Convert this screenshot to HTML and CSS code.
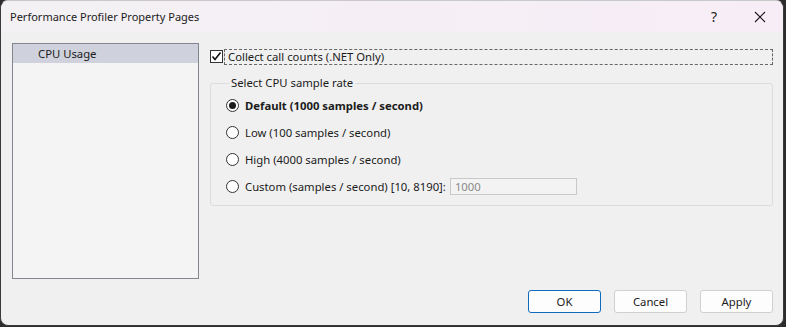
FILE: index.html
```html
<!DOCTYPE html>
<html>
<head>
<meta name="viewport" content="width=device-width, initial-scale=1">
<link rel="stylesheet" href="styles.css">
</head>
<body>

<div class="window">
  <div class="titlebar">
    <span class="title">Performance Profiler Property Pages</span>
    <span class="caption-btn help">?</span>
    <span class="caption-btn close">
      <svg width="12" height="12" viewBox="0 0 12 12"><path d="M1 1 L11 11 M11 1 L1 11" stroke="#1a1a1a" stroke-width="1.1" fill="none"/></svg>
    </span>
  </div>

  <div class="content">
    <div class="main">
      <div class="pagelist">
        <div class="page selected">CPU Usage</div>
      </div>

      <div class="props">
        <label class="check">
          <span class="box">
            <svg width="11" height="11" viewBox="0 0 11 11"><path d="M1.5 5.5 L4 8.5 L9.5 1.5" stroke="#111" stroke-width="1.6" fill="none"/></svg>
          </span>
          <span class="focus">Collect call counts (.NET Only)</span>
        </label>

        <fieldset class="group">
          <legend>Select CPU sample rate</legend>
          <div class="radio checked"><span class="dot"></span><b>Default (1000 samples / second)</b></div>
          <div class="radio"><span class="dot"></span>Low (100 samples / second)</div>
          <div class="radio"><span class="dot"></span>High (4000 samples / second)</div>
          <div class="radio"><span class="dot"></span>Custom (samples / second) [10, 8190]:<span class="textbox">1000</span></div>
        </fieldset>
      </div>
    </div>

    <div class="buttons">
      <span class="button default">OK</span>
      <span class="button">Cancel</span>
      <span class="button">Apply</span>
    </div>
  </div>
</div>

</body>
</html>
```

FILE: styles.css
```css
html, body {
  margin: 0;
  height: 100%;
}

body {
  font-family: "Noto Sans", "Open Sans", sans-serif;
  font-size: 11.3px;
  color: #1b1b1b;
  background-color: #2c2c2c;
  overflow: hidden;
}

.window {
  width: 782px;
  height: 324px;
  border: 1px solid #3a3a3a;
  border-top-color: #c8c8c8;
  border-radius: 8px;
  background-color: #f0f0f0;
  display: flex;
  flex-direction: column;
  overflow: hidden;
}

.titlebar {
  height: 31px;
  flex: none;
  display: flex;
  align-items: center;
  padding-left: 9px;
  background: linear-gradient(to right, #f3f1f4, #f7edf6);
}

.title {
  flex: 1;
  font-size: 11px;
}

.caption-btn {
  width: 46px;
  text-align: center;
  font-size: 13px;
}

.close {
  display: flex;
  justify-content: center;
}

.help {
  font-size: 14px;
  padding-left: 6px;
}

.content {
  flex: 1;
  display: flex;
  flex-direction: column;
  padding: 11px 10px 12px 11px;
}

.main {
  flex: 1;
  display: flex;
  gap: 11px;
}

.pagelist {
  width: 185px;
  height: 234px;
  border: 1px solid #84868f;
  background-color: #f4f4f4;
}

.page {
  height: 19px;
  line-height: 19px;
  padding-left: 25px;
}

.page.selected {
  background-color: #cfd2dc;
}

.props {
  flex: 1;
  padding-top: 5px;
}

.check {
  display: flex;
  align-items: center;
  height: 17px;
}

.box {
  width: 11px;
  height: 11px;
  border: 1px solid #333;
  background: #fff;
  display: flex;
  flex: none;
}

.focus {
  flex: 1;
  margin-left: 1px;
  border: 1px dashed #666;
  line-height: 14px;
  padding-left: 3px;
}

.group {
  margin: 11px 0 0 0;
  padding: 2px 0 5px 15px;
  border: 1px solid #dcdcdc;
  border-radius: 3px;
  height: 121px;
}

.group legend {
  padding: 0 2px;
  margin-left: 3px;
  line-height: 14px;
}

.radio {
  display: flex;
  align-items: center;
  height: 27px;
}

.dot {
  width: 11px;
  height: 11px;
  border: 1px solid #333;
  border-radius: 50%;
  background: #fff;
  margin-right: 6px;
  display: flex;
  align-items: center;
  justify-content: center;
}

.checked .dot::after {
  content: "";
  width: 7px;
  height: 7px;
  border-radius: 50%;
  background: #1b1b1b;
}

.radio b {
  font-weight: bold;
}

.textbox {
  margin-left: 4px;
  width: 121px;
  height: 15px;
  line-height: 15px;
  border: 1px solid #c9c9c9;
  background: #f3f3f3;
  color: #8a8a8a;
  padding-left: 4px;
}

.buttons {
  display: flex;
  justify-content: flex-end;
  gap: 13px;
}

.button {
  width: 71px;
  height: 21px;
  line-height: 21px;
  text-align: center;
  border: 1px solid #d0d0d0;
  border-radius: 3px;
  background: #fdfdfd;
}

.button.default {
  border-color: #0f6cbd;
}
```
